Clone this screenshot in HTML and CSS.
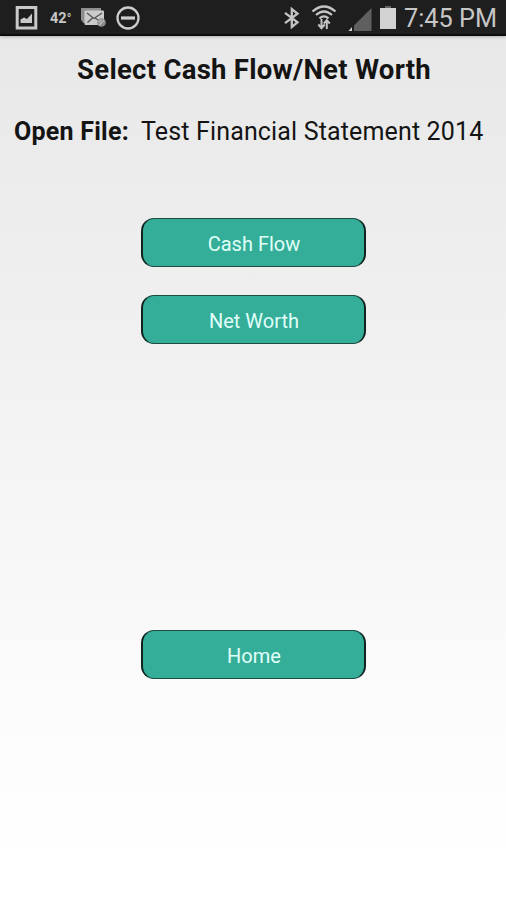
FILE: index.html
```
<!DOCTYPE html>
<html lang="en">
<head>
    <meta charset="UTF-8">
    <meta name="viewport" content="width=device-width, initial-scale=1.0">
    <title>Select Cash Flow/Net Worth</title>
    <link rel="stylesheet" href="styles.css">
</head>
<body>
    <header class="status-bar">
        <div class="status-left">
            <svg class="icon-picture" width="24" height="26" viewBox="0 0 24 26">
                <path fill="none" stroke="#c9c9c9" stroke-width="3" d="M2.200 2.500h18.600v20.500H2.200z"/>
                <path fill="#c9c9c9" d="M5.500 18v-3.500l3.500-2 3 1.500 5-5.500V18z"/>
            </svg>
            <span class="temp">42<span class="degree">°</span></span>
            <svg class="icon-mail" width="26" height="22" viewBox="0 0 26 22">
                <path fill="#8f8f8f" d="M0 1h20v3H4v12H2.500L0 13z"/>
                <rect x="3.500" y="3.500" width="19.500" height="14.500" rx="1" fill="#cbcbcb"/>
                <path fill="none" stroke="#555" stroke-width="1.400" d="M6 6l7 5.500L21 6M6.500 15.500l5-4.500M14 11l3 2"/>
                <circle cx="20.500" cy="15.500" r="4.300" fill="#8c8c8c"/>
                <path fill="none" stroke="#bdbdbd" stroke-width="1.200" d="M18 18.500l5-5.500M17.500 15.500l3-3"/>
            </svg>
            <svg class="icon-block" width="26" height="26" viewBox="0 0 26 26">
                <circle cx="13" cy="13" r="10.500" fill="none" stroke="#cdcdcd" stroke-width="2.300"/>
                <path stroke="#cdcdcd" stroke-width="3.200" d="M6 13h14"/>
            </svg>
        </div>
        <div class="status-right">
            <svg class="icon-bluetooth" width="16" height="22" viewBox="0 0 16 22">
                <path fill="none" stroke="#c4c4c4" stroke-width="2.300" d="M1 5.800L13.500 15.300 7.800 20V2l5.700 4.700L1 16.200"/>
            </svg>
            <svg class="icon-wifi" width="26" height="26" viewBox="0 0 26 26">
                <g fill="none" stroke="#c4c4c4" stroke-width="2.300">
                    <path d="M1.500 6.500Q13-3.500 24.500 6.500"/>
                    <path d="M5 10Q13 3 21 10"/>
                    <path d="M8.500 13.300Q13 9.500 17.500 13.300"/>
                </g>
                <path fill="none" stroke="#c4c4c4" stroke-width="2" d="M10.500 14v9M7.300 19.500l3.200 3.700 3.200-3.700M15.800 24v-9M12.800 18.500l3-3.300 3 3.300"/>
            </svg>
            <svg class="icon-signal" width="24" height="24" viewBox="0 0 24 24">
                <path fill="#5f5f5f" d="M23.500 0v23H.5z"/>
                <path fill="#1e1e1e" d="M4 16h2v8H4z"/>
                <path fill="#d2d2d2" d="M.5 23l3.500-4v4z"/>
            </svg>
            <svg class="icon-battery" width="16" height="24" viewBox="0 0 16 24">
                <path fill="#666" d="M5 0h6v2H5z"/>
                <path fill="#d2d2d2" d="M0 2h16v21H0z"/>
            </svg>
            <span class="time">7:45 PM</span>
        </div>
    </header>

    <main class="screen">
        <h1>Select Cash Flow/Net Worth</h1>
        <p class="open-file"><b>Open File:</b><span class="file-name">Test Financial Statement 2014</span></p>
        <div class="menu">
            <button>Cash Flow</button>
            <button>Net Worth</button>
            <button class="home">Home</button>
        </div>
    </main>
</body>
</html>
```
FILE: styles.css
```
* {
    box-sizing: border-box;
}

body {
    margin: 0;
    height: 900px;
    overflow: hidden;
    font-family: Roboto, sans-serif;
    color: #141414;
    background: linear-gradient(#e8e8e8 36px, #f0f0f0 330px, #fbfbfb 680px, #ffffff 860px);
}

/* Status bar */
.status-bar {
    display: flex;
    justify-content: space-between;
    height: 36px;
    background-color: #1e1e1e;
    border-bottom: 2px solid #0c0c0c;
    box-shadow: 0 1px 3px rgba(0, 0, 0, 0.25);
    color: #c6c6c6;
}

.status-left,
.status-right {
    display: flex;
    align-items: center;
    height: 36px;
}

.status-left {
    padding-left: 15px;
}

.temp {
    width: 22px;
    margin-left: 11px;
    font-size: 14.5px;
    font-weight: 700;
    white-space: nowrap;
}

.degree {
    font-size: 12px;
}

.icon-mail {
    margin-left: 9px;
}

.icon-block {
    margin-left: 8px;
}

.status-right {
    padding-right: 9px;
}

.icon-wifi {
    margin-left: 11px;
}

.icon-signal {
    margin: 3px 0 0 11px;
}

.icon-battery {
    margin: 0 8px;
}

.time {
    width: 93px;
    font-size: 25.3px;
    white-space: nowrap;
}

/* Page content */
h1 {
    margin: 0;
    padding: 18px 0 0 2px;
    font-size: 27.5px;
    line-height: 32px;
    font-weight: 700;
    letter-spacing: 0.27px;
    text-align: center;
    white-space: nowrap;
}

.open-file {
    display: flex;
    margin: 31px 0 0 14px;
    font-size: 25px;
    line-height: 30px;
    letter-spacing: 0.15px;
    white-space: nowrap;
}

.open-file b {
    width: 127px;
    letter-spacing: 0.25px;
}

/* Buttons */
.menu {
    display: flex;
    flex-direction: column;
    align-items: center;
    gap: 28px;
    margin-top: 71px;
    padding-left: 1px;
}

button {
    width: 225px;
    height: 49px;
    padding: 2px 0 0 1px;
    font-family: Roboto, sans-serif;
    font-size: 20px;
    color: #e0fff8;
    background-color: #35ae99;
    border: 1px solid #1d4a41;
    border-left: 2px solid #10231f;
    border-right: 2px solid #10231f;
    border-radius: 13px;
}

.home {
    margin-top: 258px;
}
```
